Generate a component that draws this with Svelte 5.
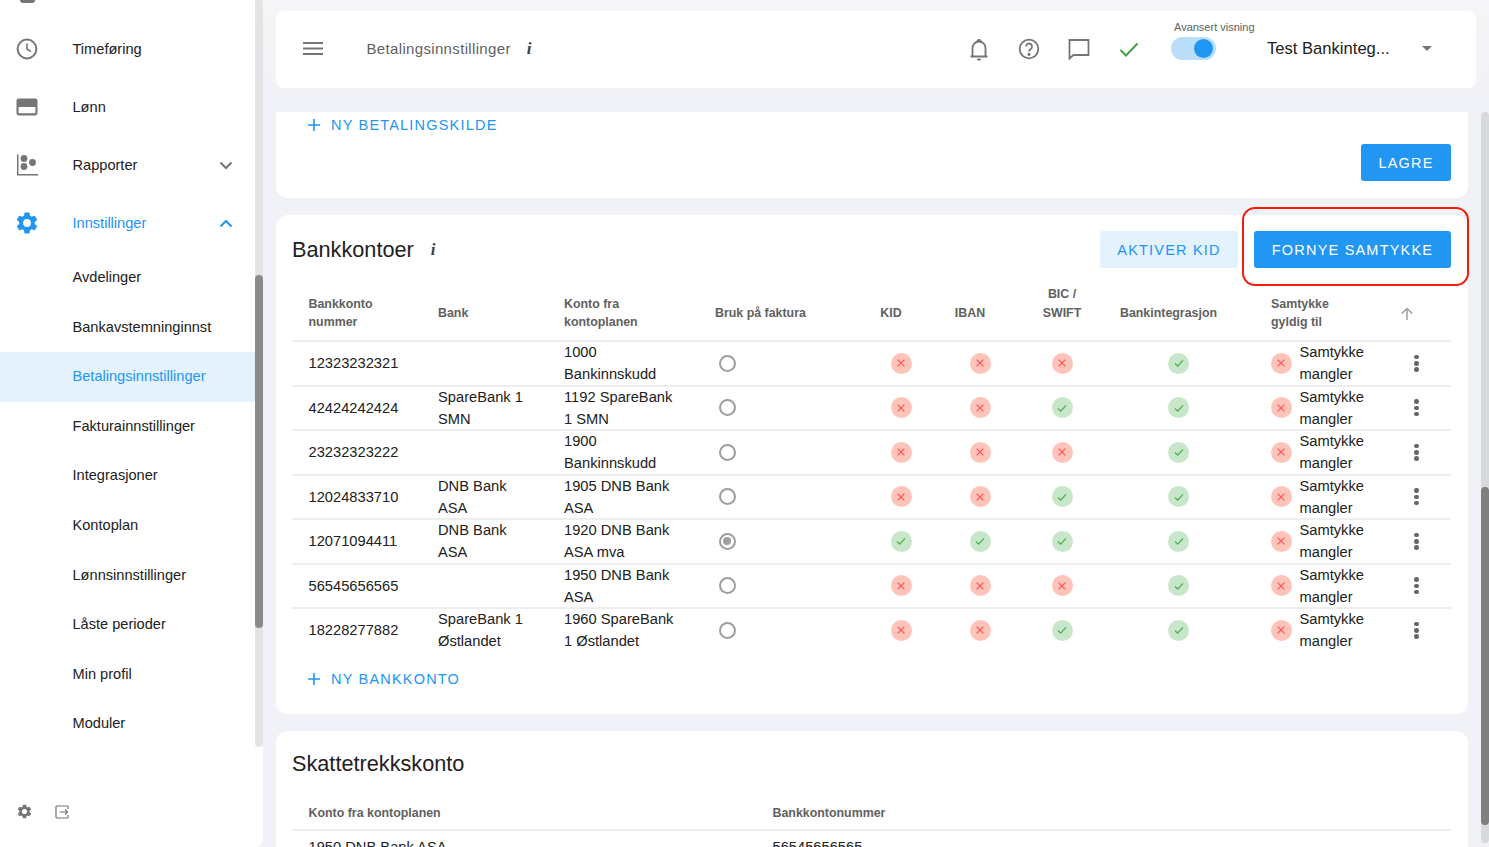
<script>
  const items = ['Avdelinger','Bankavstemninginnst','Betalingsinnstillinger','Fakturainnstillinger','Integrasjoner','Kontoplan','Lønnsinnstillinger','Låste perioder','Min profil','Moduler'];
  const rows = [
    ['12323232321','','1000 Bankinnskudd',0,0,0,1],
    ['42424242424','SpareBank 1 SMN','1192 SpareBank 1 SMN',0,0,1,1],
    ['23232323222','','1900 Bankinnskudd',0,0,0,1],
    ['12024833710','DNB Bank ASA','1905 DNB Bank ASA',0,0,1,1],
    ['12071094411','DNB Bank ASA','1920 DNB Bank ASA mva',1,1,1,1],
    ['56545656565','','1950 DNB Bank ASA',0,0,0,1],
    ['18228277882','SpareBank 1 Østlandet','1960 SpareBank 1 Østlandet',0,0,1,1]
  ];
</script>

{#snippet status(ok)}
  <span class="status" class:ok>
    <svg viewBox="0 0 12 12" width="12" height="12">
      {#if ok}<path d="M2 6.5l2.7 2.6L10 3.4" />{:else}<path d="M2.6 2.6l6.8 6.8M9.4 2.6l-6.8 6.8" />{/if}
    </svg>
  </span>
{/snippet}

{#snippet gear(size, color)}
  <svg viewBox="0 0 24 24" width={size} height={size} fill={color}><path d="M19.14 12.94c.04-.3.06-.61.06-.94s-.02-.64-.07-.94l2.03-1.58a.49.49 0 0 0 .12-.61l-1.92-3.32a.49.49 0 0 0-.59-.22l-2.39.96c-.5-.38-1.03-.7-1.62-.94l-.36-2.54a.48.48 0 0 0-.48-.41h-3.84a.48.48 0 0 0-.47.41l-.36 2.54c-.59.24-1.13.57-1.62.94l-2.39-.96a.48.48 0 0 0-.59.22L2.73 8.87a.48.48 0 0 0 .12.61l2.03 1.58c-.05.3-.09.63-.09.94s.02.64.07.94l-2.03 1.58a.49.49 0 0 0-.12.61l1.92 3.32c.12.22.37.29.59.22l2.39-.96c.5.38 1.03.7 1.62.94l.36 2.54c.05.24.24.41.48.41h3.84c.24 0 .44-.17.47-.41l.36-2.54c.59-.24 1.13-.56 1.62-.94l2.39.96c.22.08.47 0 .59-.22l1.92-3.32a.48.48 0 0 0-.12-.61l-2.01-1.58zM12 15.6A3.6 3.6 0 1 1 12 8.4a3.6 3.6 0 0 1 0 7.2z"/></svg>
{/snippet}

{#snippet plus()}
  <svg class="plus" viewBox="0 0 12 12" width="12" height="12" fill="none" stroke="#2196f3" stroke-width="1.6"><path d="M6 0v12M0 6h12"/></svg>
{/snippet}

<div class="page">
  <aside class="side">
    <div class="side-scroll">
      <div class="top-stub"><span></span></div>
      <div class="nav-row">
        <svg class="ni" viewBox="0 0 24 24" width="24" height="24" fill="none" stroke="#757575" stroke-width="2"><circle cx="12" cy="12" r="9.4"/><path d="M12 6.5V12l4 2.6" stroke-width="1.6"/></svg>
        <span>Timeføring</span>
      </div>
      <div class="nav-row">
        <svg class="ni" viewBox="0.57 0.57 22.86 22.86" width="24" height="24" fill="#757575"><path d="M4 4h16a2 2 0 0 1 2 2v12a2 2 0 0 1-2 2H4a2 2 0 0 1-2-2V6a2 2 0 0 1 2-2zm0 8v6h16v-6z"/></svg>
        <span>Lønn</span>
      </div>
      <div class="nav-row">
        <svg class="ni" viewBox="0 0 24 24" width="24" height="24" fill="#757575"><path d="M2 1.500h1.500V21H23v1.500H2z"/><circle cx="9" cy="5.500" r="3.400"/><circle cx="9" cy="13.500" r="3.400"/><circle cx="17.500" cy="9.500" r="3.400"/></svg>
        <span>Rapporter</span>
        <svg class="chev" viewBox="0 0 14 9" width="14" height="9" fill="none" stroke="#757575" stroke-width="2"><path d="M1.500 1.500L7 7l5.500-5.500"/></svg>
      </div>
      <div class="nav-row active">
        <span class="ni">{@render gear(26, '#2196f3')}</span>
        <span>Innstillinger</span>
        <svg class="chev" viewBox="0 0 14 9" width="14" height="9" fill="none" stroke="#2196f3" stroke-width="2"><path d="M1.500 7.500L7 2l5.500 5.500"/></svg>
      </div>
      <div class="sub">
        {#each items as it}
          <div class="sub-row" class:sel={it === 'Betalingsinnstillinger'}>{it}</div>
        {/each}
      </div>
    </div>
    <div class="side-foot">
      {@render gear(17, '#757575')}
      <svg viewBox="0 0 14 14" width="14" height="14" fill="none" stroke="#757575" stroke-width="1.200"><path d="M13 4V2a1 1 0 0 0-1-1H2a1 1 0 0 0-1 1v10a1 1 0 0 0 1 1h10a1 1 0 0 0 1-1v-2"/><path d="M4.500 7h8M10 4.500L12.500 7 10 9.500"/></svg>
    </div>
    <div class="side-track"><div class="side-thumb"></div></div>
  </aside>

  <main class="main">
    <header class="topbar">
      <svg class="burger" viewBox="0 0 20 13" width="20" height="13" fill="#757575"><rect width="20" height="2"/><rect y="5.500" width="20" height="2"/><rect y="11" width="20" height="2"/></svg>
      <span class="crumb">Betalingsinnstillinger</span>
      <i class="info">i</i>
      <div class="top-right">
        <svg viewBox="0 0 24 24" width="24" height="24" fill="none" stroke="#757575" stroke-width="1.800"><path d="M5.500 19V11a6.500 6.500 0 0 1 13 0v8M3.500 19.500h17" /><path d="M10.500 4.300a1.500 1.500 0 0 1 3 0M10.500 21.700a1.600 1.600 0 0 0 3 0"/></svg>
        <svg viewBox="0 0 24 24" width="24" height="24" fill="none" stroke="#757575" stroke-width="1.800"><circle cx="12" cy="12" r="9.300"/><path d="M9 9.500a3 3 0 1 1 4.700 2.500c-1 .7-1.700 1.300-1.700 2.500"/><circle cx="12" cy="17.300" r=".7" fill="#757575"/></svg>
        <svg viewBox="0 0 24 24" width="24" height="24" fill="none" stroke="#757575" stroke-width="1.800"><path d="M3 3h18.500v15H6.500L2.500 21.500V3z"/></svg>
        <svg viewBox="0 0 24 24" width="24" height="24" fill="none" stroke="#43a047" stroke-width="2"><path d="M3.500 13l5.500 5.500L20.500 6.500"/></svg>
        <div class="adv">
          <span class="adv-label">Avansert visning</span>
          <span class="switch"><span class="knob"></span></span>
        </div>
        <span class="company">Test Bankinteg...</span>
        <span class="caret"></span>
      </div>
    </header>

    <div class="content">
      <section class="card first">
        <div class="add">{@render plus()}NY BETALINGSKILDE</div>
        <div class="save-row"><button class="btn solid">LAGRE</button></div>
      </section>

      <section class="card bank">
        <div class="card-head">
          <h2>Bankkontoer</h2>
          <i class="info">i</i>
          <div class="head-btns">
            <button class="btn soft">AKTIVER KID</button>
            <div class="ring"><button class="btn solid wide">FORNYE SAMTYKKE</button></div>
          </div>
        </div>
        <table>
          <colgroup>
            <col class="c1"><col class="c2"><col class="c3"><col class="c4"><col class="c5"><col class="c6"><col class="c7"><col class="c8"><col class="c9"><col>
          </colgroup>
          <thead>
            <tr>
              <th>Bankkonto<br>nummer</th><th>Bank</th><th>Konto fra<br>kontoplanen</th><th>Bruk på faktura</th>
              <th class="c shift">KID</th><th class="c shift">IBAN</th><th class="c bic">BIC /<br>SWIFT</th><th class="c shift">Bankintegrasjon</th>
              <th class="sam">Samtykke<br>gyldig til</th>
              <th class="arrow"><svg viewBox="0 0 14 14" width="14" height="14" fill="none" stroke="#9e9e9e" stroke-width="1.500"><path d="M7 13V1.500M1.800 6.500L7 1.500l5.200 5"/></svg></th>
            </tr>
          </thead>
          <tbody>
            {#each rows as r, i}
              <tr>
                <td>{r[0]}</td>
                <td class="wrap">{r[1]}</td>
                <td class="acct">{r[2]}</td>
                <td><span class="radio" class:on={i === 4}></span></td>
                <td class="c">{@render status(r[3])}</td>
                <td class="c">{@render status(r[4])}</td>
                <td class="c">{@render status(r[5])}</td>
                <td class="c">{@render status(r[6])}</td>
                <td class="sam"><div class="sam-cell">{@render status(0)}<span class="sam-text">Samtykke mangler</span></div></td>
                <td class="dots"><span></span><span></span><span></span></td>
              </tr>
            {/each}
          </tbody>
        </table>
        <div class="add bottom">{@render plus()}NY BANKKONTO</div>
      </section>

      <section class="card tax">
        <h2>Skattetrekkskonto</h2>
        <div class="tax-grid">
          <div class="th">Konto fra kontoplanen</div><div class="th">Bankkontonummer</div>
          <div class="td">1950 DNB Bank ASA</div><div class="td">56545656565</div>
        </div>
      </section>
    </div>
    <div class="main-track"><div class="main-thumb"></div></div>
  </main>
</div>

<style>
  :global(body) { margin: 0; background: linear-gradient(#f6f6f8, #f1f2f7 100px); font-family: "Liberation Sans", Arial, sans-serif; overflow: hidden; color: #212121; }
  .page { display: flex; height: 847px; overflow: hidden; }

  .side { position: relative; width: 263px; flex: none; background: #fff; border-bottom-right-radius: 8px; overflow: hidden; }
  .top-stub { height: 20px; }
  .top-stub span { display: block; width: 15px; height: 3px; margin-left: 20px; background: #757575; border-radius: 0 0 3px 3px; }
  .nav-row { height: 58px; display: flex; align-items: center; font-size: 14.6px; padding-left: 15px; position: relative; }
  .nav-row span:not(.ni) { margin-left: 33.5px; }
  .nav-row .ni { flex: none; display: flex; }
  .nav-row.active { color: #2196f3; }
  .nav-row.active .ni { margin-left: -1px; margin-right: -1px; }
  .chev { position: absolute; left: 219px; top: 25px; }
  .sub { padding-top: 1px; }
  .sub-row { height: 49.6px; line-height: 49.6px; padding-left: 72.5px; font-size: 14.6px; width: 255px; box-sizing: border-box; }
  .sub-row.sel { background: #e3f2fd; color: #2196f3; }
  .side-foot { position: absolute; left: 16px; top: 803px; display: flex; align-items: center; gap: 22px; }
  .side-track { position: absolute; right: 0; top: 0; width: 8px; height: 747px; background: #e4e4e4; border-radius: 0 0 4px 4px; }
  .side-thumb { position: absolute; top: 275px; left: 0; width: 8px; height: 353px; background: #8a8a8a; border-radius: 4px; }

  .main { position: relative; flex: 1; min-width: 0; padding: 11px 0 0 13px; }
  .topbar { width: 1200px; height: 77px; background: #fff; border-radius: 8px; display: flex; align-items: center; box-sizing: border-box; padding: 0 0 2px 27px; }
  .burger { flex: none; }
  .crumb { margin-left: 43.5px; font-size: 15px; letter-spacing: 0.34px; color: #616161; }
  .info { font-family: "Liberation Serif", serif; font-weight: 700; font-style: italic; font-size: 17px; color: #424242; margin-left: 16px; }
  .top-right { margin-left: auto; display: flex; align-items: center; }
  .top-right > svg { margin-right: 26px; flex: none; }
  .top-right > svg:nth-of-type(4) { margin-right: 30px; }
  .adv { width: 95px; height: 77px; position: relative; }
  .adv-label { position: absolute; left: 3px; top: 11px; font-size: 11px; color: #616161; white-space: nowrap; }
  .switch { position: absolute; left: 0; top: 27px; width: 45px; height: 23px; border-radius: 12px; background: #bbdefb; }
  .knob { position: absolute; right: 3px; top: 2px; width: 19px; height: 19px; border-radius: 50%; background: #2196f3; }
  .company { font-size: 16.6px; color: #212121; width: 156px; white-space: nowrap; margin-right: -1px; margin-left: 1px; }
  .caret { width: 0; height: 0; border: 5px solid transparent; border-top: 5.5px solid #757575; border-bottom: 0; margin-right: 44px; }

  .content { margin-top: 24px; width: 1192px; display: flex; flex-direction: column; gap: 17px; }
  .card { background: #fff; padding: 0 17px 0 16px; box-sizing: border-box; }
  .first { height: 86px; border-radius: 0 0 12px 12px; }
  .add { color: #2196f3; font-size: 14.5px; letter-spacing: 1.2px; display: flex; align-items: center; padding-left: 16px; height: 27px; }
  .first .add { height: 27px; margin-top: -1px; }
  .plus { margin-right: 11px; flex: none; }
  .add.bottom { margin-top: 13px; }
  .save-row { display: flex; justify-content: flex-end; margin-top: 6px; }
  .btn { border: 0; font-family: inherit; font-size: 14.5px; letter-spacing: 1.2px; border-radius: 3px; height: 37px; box-sizing: border-box; padding: 0; }
  .btn.solid { background: #2196f3; color: #fff; width: 90px; }
  .btn.solid.wide { width: 197px; }
  .btn.soft { background: #e3f2fd; color: #2196f3; width: 138px; }

  .bank { border-radius: 12px; height: 499px; }
  .card-head { display: flex; align-items: center; height: 70px; }
  h2 { font-size: 21.7px; font-weight: 400; margin: 0; color: #212121; }
  .card-head .info { margin-left: 17px; }
  .head-btns { margin-left: auto; display: flex; align-items: center; gap: 16px; margin-top: -1px; }
  .ring { position: relative; display: flex; }
  .ring::after { content: ""; position: absolute; left: -12px; top: -24px; width: 227px; height: 79px; border: 2.7px solid #f41c0a; border-radius: 13px; box-sizing: border-box; pointer-events: none; }

  table { width: 1159px; table-layout: fixed; border-collapse: separate; border-spacing: 0; }
  .c1 { width: 129.5px; }
  .c2 { width: 126px; }
  .c3 { width: 151px; }
  .c4 { width: 165.5px; }
  .c5 { width: 74px; }
  .c6 { width: 84px; }
  .c7 { width: 80px; }
  .c8 { width: 153px; }
  .c9 { width: 135px; }
  th, td { position: relative; box-sizing: border-box; }
  th::after, tbody tr:not(:last-child) td::after { content: ""; position: absolute; left: 0; right: 0; bottom: -1px; height: 2px; background: #eee; }
  th { font-size: 12.4px; font-weight: 700; color: #616161; text-align: left; padding: 0 0 0 16.5px; height: 56px; line-height: 18.5px; }
  td { font-size: 14.7px; padding: 0 0 0 16.5px; height: 44.5px; line-height: 22px; color: #212121; }
  th.c, td.c { text-align: center; padding: 0; }
  td.c { line-height: 0; }
  th.shift { padding-right: 20px; }
  th.bic { vertical-align: top; }
  .acct { padding-right: 20px; }
  .wrap { padding-right: 19.5px; }
  .status { display: inline-flex; width: 21px; height: 21px; border-radius: 50%; background: #ffc4b9; align-items: center; justify-content: center; vertical-align: middle; flex: none; }
  .status path { fill: none; stroke: #f55; stroke-width: 1.3; }
  .status.ok { background: #c8e6c9; }
  .status.ok path { stroke: #4caf50; }
  .radio { display: block; width: 17px; height: 17px; border: 2px solid #9e9e9e; border-radius: 50%; box-sizing: border-box; margin-left: 3.5px; position: relative; }
  .radio.on::after { content: ""; position: absolute; inset: 2.5px; background: #9e9e9e; border-radius: 50%; }
  .sam-cell { display: flex; align-items: center; gap: 8px; }
  .sam-text { width: 80px; }
  th.sam { padding-left: 16px; }
  td.sam { padding-left: 15.5px; }
  th.arrow { padding: 2px 0 0 10px; }
  th.arrow svg { display: block; }
  td.dots { padding: 0; }
  .dots span { display: block; width: 4.5px; height: 4.5px; border-radius: 50%; background: #666; margin: 1.6px 0 1.6px 24px; }

  .tax { border-radius: 12px 12px 0 0; height: 140px; padding-top: 20px; }
  .tax h2 { line-height: 26px; }
  .tax-grid { display: grid; grid-template-columns: 464px 1fr; margin-top: 20px; }
  .tax-grid .th { font-size: 12.4px; font-weight: 700; color: #616161; padding-left: 16.5px; height: 32px; line-height: 32px; border-bottom: 2px solid #eee; }
  .tax-grid .td { font-size: 14.7px; padding-left: 16.5px; height: 32px; line-height: 32px; }

  .main-track { position: absolute; right: 0; top: 112px; width: 8px; height: 731px; background: #d8d9dd; border-radius: 4px; }
  .main-thumb { position: absolute; left: 0; top: 375px; width: 8px; height: 338px; background: #7f7f7f; border-radius: 4px; }
</style>
